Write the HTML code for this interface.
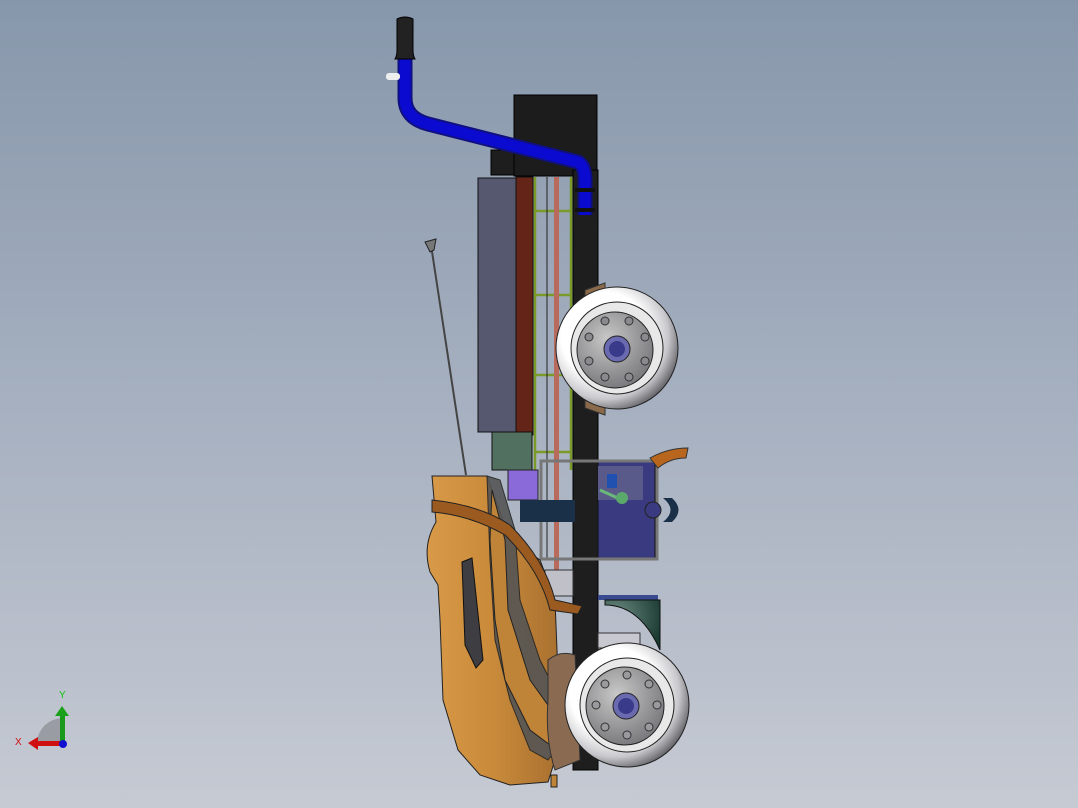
<!DOCTYPE html>
<html><head><meta charset="utf-8"><style>
html,body{margin:0;padding:0;width:1078px;height:808px;overflow:hidden}
body{background:linear-gradient(#8797ab 0%,#a6b0c0 50%,#c6cad3 100%)}
svg{position:absolute;left:0;top:0}
text{font-family:"Liberation Sans",sans-serif}
</style></head><body>
<svg width="1078" height="808" viewBox="0 0 1078 808">
<defs>
<radialGradient id="tire" cx="0.4" cy="0.4" r="0.65">
<stop offset="0.55" stop-color="#ffffff"/><stop offset="0.8" stop-color="#c8c8cc"/><stop offset="1" stop-color="#5a5a60"/></radialGradient>
<radialGradient id="hub" cx="0.4" cy="0.35" r="0.75"><stop offset="0" stop-color="#c8c8c8"/><stop offset="1" stop-color="#707074"/></radialGradient>
<linearGradient id="bag" x1="0" x2="1"><stop offset="0" stop-color="#d89a48"/><stop offset="0.5" stop-color="#c98a3a"/><stop offset="1" stop-color="#a87030"/></linearGradient>
<radialGradient id="fend" cx="0.2" cy="0.3" r="0.9"><stop offset="0" stop-color="#6a8a80"/><stop offset="1" stop-color="#183830"/></radialGradient>
</defs>
<rect x="514" y="95" width="83" height="81" fill="#1c1c1c" stroke="#000"/>
<rect x="573" y="170" width="25" height="600" fill="#1e1e1e" stroke="#000"/>
<rect x="491" y="150" width="23" height="25" fill="#1e1e1e" stroke="#000"/>
<g stroke="#7a9a2a" stroke-width="2.5" fill="none">
<line x1="535" y1="177" x2="535" y2="470"/><line x1="571" y1="177" x2="571" y2="470"/>
<line x1="535" y1="211" x2="571" y2="211"/><line x1="535" y1="295" x2="571" y2="295"/>
<line x1="535" y1="375" x2="571" y2="375"/><line x1="535" y1="452" x2="571" y2="452"/>
</g>
<line x1="547" y1="177" x2="547" y2="560" stroke="#222" stroke-width="1"/>
<rect x="554" y="177" width="5" height="400" fill="#b86a5c"/>
<rect x="478" y="178" width="38" height="254" fill="#565870" stroke="#111"/>
<rect x="516" y="177" width="17" height="258" fill="#652418" stroke="#111"/>
<rect x="492" y="432" width="40" height="38" fill="#527060" stroke="#111"/>
<rect x="508" y="470" width="30" height="30" fill="#8a6ad8" stroke="#222"/>
<path d="M405 58 L405 98 Q405 118 428 124 L578 162 Q585 166 585 180 L585 215" fill="none" stroke="#101080" stroke-width="15"/>
<path d="M405 58 L405 98 Q405 118 428 124 L578 162 Q585 166 585 180 L585 215" fill="none" stroke="#0a0ad0" stroke-width="11"/>
<rect x="575" y="188" width="20" height="4" fill="#111"/><rect x="575" y="208" width="20" height="4" fill="#111"/>
<rect x="386" y="73" width="14" height="7" rx="3" fill="#eee"/>
<path d="M397 19 Q405 15 413 19 L413 50 Q413 56 415 59 L395 59 Q397 56 397 50Z" fill="#222" stroke="#000"/>
<line x1="431" y1="245" x2="466" y2="475" stroke="#444" stroke-width="2"/>
<path d="M425 242 L436 239 L434 250 L430 252Z" fill="#777" stroke="#222"/>
<path d="M585 290 L605 283 L605 415 L585 408Z" fill="#8a6a4a" stroke="#333"/>
<circle cx="617" cy="348" r="61" fill="url(#tire)" stroke="#222"/>
<circle cx="617" cy="348" r="46" fill="#e8e8e8" stroke="#222"/>
<circle cx="615" cy="350" r="38" fill="url(#hub)" stroke="#222"/>
<g fill="#8a8a8e" stroke="#333"><circle cx="605" cy="321" r="4"/><circle cx="629" cy="321" r="4"/><circle cx="645" cy="337" r="4"/><circle cx="645" cy="361" r="4"/><circle cx="629" cy="377" r="4"/><circle cx="605" cy="377" r="4"/><circle cx="589" cy="361" r="4"/><circle cx="589" cy="337" r="4"/></g>
<circle cx="617" cy="349" r="13" fill="#6a6ab0" stroke="#222"/><circle cx="617" cy="349" r="8" fill="#3a3a8a"/>
<rect x="598" y="462" width="57" height="96" fill="#3a3a80" stroke="#111"/>
<rect x="598" y="466" width="45" height="34" fill="#5a5a8a"/>
<g stroke="#777" stroke-width="3" fill="none"><rect x="541" y="461" width="116" height="98"/></g>
<rect x="607" y="474" width="10" height="14" fill="#2050b0"/>
<path d="M600 490 L622 500" stroke="#6ab87a" stroke-width="3"/><circle cx="622" cy="498" r="6" fill="#5aa86a"/>
<g fill="#3a3a80" stroke="#222"><circle cx="545" cy="510" r="8"/><circle cx="653" cy="510" r="8"/></g>
<rect x="520" y="500" width="55" height="22" fill="#1a3048"/>
<path d="M663 498 Q678 510 663 522 L672 522 Q685 510 672 498Z" fill="#1a3048"/>
<path d="M650 458 Q668 448 688 448 L686 458 Q670 458 658 468Z" fill="#b8661e" stroke="#333"/>
<rect x="545" y="570" width="28" height="26" fill="#c0c0c8" stroke="#333"/>
<rect x="598" y="595" width="60" height="5" fill="#3a4a90"/>
<path d="M605 600 L660 600 L660 650 Q640 605 605 605Z" fill="url(#fend)" stroke="#111"/>
<rect x="598" y="633" width="42" height="15" fill="#c8c8d0" stroke="#333"/>
<path d="M432 476 L487 476 L510 540 L540 560 L555 600 L557 650 L560 720 L555 760 L548 782 L510 785 L480 775 L458 750 L443 700 L440 620 L438 585 L430 572 Q422 545 436 522Z" fill="url(#bag)" stroke="#222"/>
<path d="M487 476 L500 480 L515 530 L520 600 L540 660 L560 700 L560 745 L548 760 L530 750 L510 700 L495 640 L490 560 Z" fill="#555" stroke="#222" opacity="0.9"/>
<path d="M492 490 L505 540 L508 610 L530 680 L555 715 L550 745 L530 730 L505 680 L495 620 L490 540Z" fill="#c08438" stroke="#222"/>
<path d="M462 562 L472 558 L483 660 L476 668 L465 645Z" fill="#3d3d42" stroke="#111"/>
<path d="M432 500 Q480 505 510 525 Q545 560 555 600 L582 606 L578 614 L550 610 Q540 570 505 535 Q470 515 432 512Z" fill="#9a5a20" stroke="#222"/>
<path d="M548 660 Q560 650 575 655 L580 760 L555 770 Q545 740 548 700Z" fill="#8a6a50" stroke="#333"/>
<rect x="551" y="775" width="6" height="12" fill="#c08438" stroke="#222"/>
<circle cx="627" cy="705" r="62" fill="url(#tire)" stroke="#222"/>
<circle cx="627" cy="705" r="47" fill="#e8e8e8" stroke="#222"/>
<circle cx="625" cy="706" r="39" fill="url(#hub)" stroke="#222"/>
<g fill="#9a9a9e" stroke="#333"><circle cx="627" cy="675" r="4"/><circle cx="649" cy="684" r="4"/><circle cx="657" cy="705" r="4"/><circle cx="649" cy="727" r="4"/><circle cx="627" cy="735" r="4"/><circle cx="605" cy="727" r="4"/><circle cx="596" cy="705" r="4"/><circle cx="605" cy="684" r="4"/></g>
<circle cx="626" cy="706" r="13" fill="#6a6ab0" stroke="#222"/><circle cx="626" cy="706" r="8" fill="#3a3a8a"/>
<path d="M62 718 Q40 720 36 744 L62 744Z" fill="#9a9ca4"/>
<rect x="60" y="714" width="5" height="30" fill="#1a9a1a"/><path d="M55 716 L62 706 L69 716Z" fill="#1aa01a"/>
<rect x="36" y="741" width="26" height="5" fill="#d01010"/><path d="M38 737 L28 743 L38 750Z" fill="#d01010"/>
<circle cx="63" cy="744" r="4" fill="#1010d0"/>
<text x="59" y="698" font-size="10" fill="#10c010">Y</text>
<text x="15" y="745" font-size="10" fill="#d01010">X</text>
</svg>
</body></html>
